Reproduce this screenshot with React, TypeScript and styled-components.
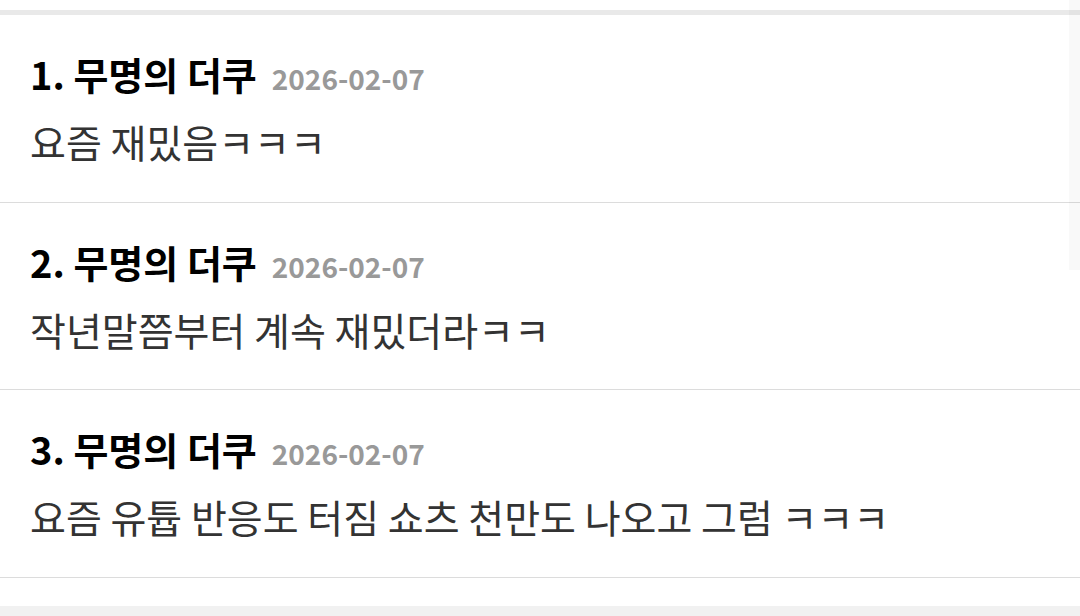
import React from "react";
import styled, { createGlobalStyle } from "styled-components";

const Global = createGlobalStyle`
  html, body { margin: 0; padding: 0; background: #fff; }
  body { font-family: "Noto Sans CJK KR", "Noto Sans", sans-serif; }
`;

const Page = styled.div`
  position: relative;
  width: 1080px;
  height: 616px;
  overflow: hidden;
  display: flex;
  flex-direction: column;
  background: #fff;
`;

const TopGap = styled.div`
  height: 10px;
  background: #fff;
`;

const Band = styled.div`
  height: 5px;
  background: #e9e9e9;
`;

const List = styled.ul`
  list-style: none;
  margin: 0;
  padding: 0;
`;

const Item = styled.li`
  height: 187.5px;
  box-sizing: border-box;
  padding: 33px 30px 0;
  border-bottom: 1.5px solid #dcdcdc;
  display: flex;
  flex-direction: column;
  gap: 15px;
`;

const Head = styled.div`
  display: flex;
  align-items: baseline;
  gap: 15px;
  line-height: 52px;
  height: 52px;
`;

const Name = styled.span`
  font-size: 38px;
  font-weight: 700;
  color: #000;
`;

const DateText = styled.span`
  font-size: 28px;
  font-weight: 700;
  color: #999;
`;

const Body = styled.div`
  font-size: 39px;
  line-height: 52px;
  color: #333;
`;

const Spacer = styled.div`
  height: 28.5px;
  background: #fff;
`;

const Footer = styled.div`
  flex: 1;
  background: #f1f1f1;
`;

const Rail = styled.div`
  position: absolute;
  right: 0;
  top: 0;
  width: 11px;
  height: 270px;
  background: rgba(0, 0, 0, 0.025);
`;

const comments = [
  { n: 1, date: "2026-02-07", text: "요즘 재밌음ㅋㅋㅋ" },
  { n: 2, date: "2026-02-07", text: "작년말쯤부터 계속 재밌더라ㅋㅋ" },
  { n: 3, date: "2026-02-07", text: "요즘 유튭 반응도 터짐 쇼츠 천만도 나오고 그럼 ㅋㅋㅋ" },
];

export default function App() {
  return (
    <Page>
      <Global />
      <TopGap />
      <Band />
      <List>
        {comments.map((c) => (
          <Item key={c.n}>
            <Head>
              <Name>{c.n}. 무명의 더쿠</Name>
              <DateText>{c.date}</DateText>
            </Head>
            <Body>{c.text}</Body>
          </Item>
        ))}
      </List>
      <Spacer />
      <Footer />
      <Rail />
    </Page>
  );
}
